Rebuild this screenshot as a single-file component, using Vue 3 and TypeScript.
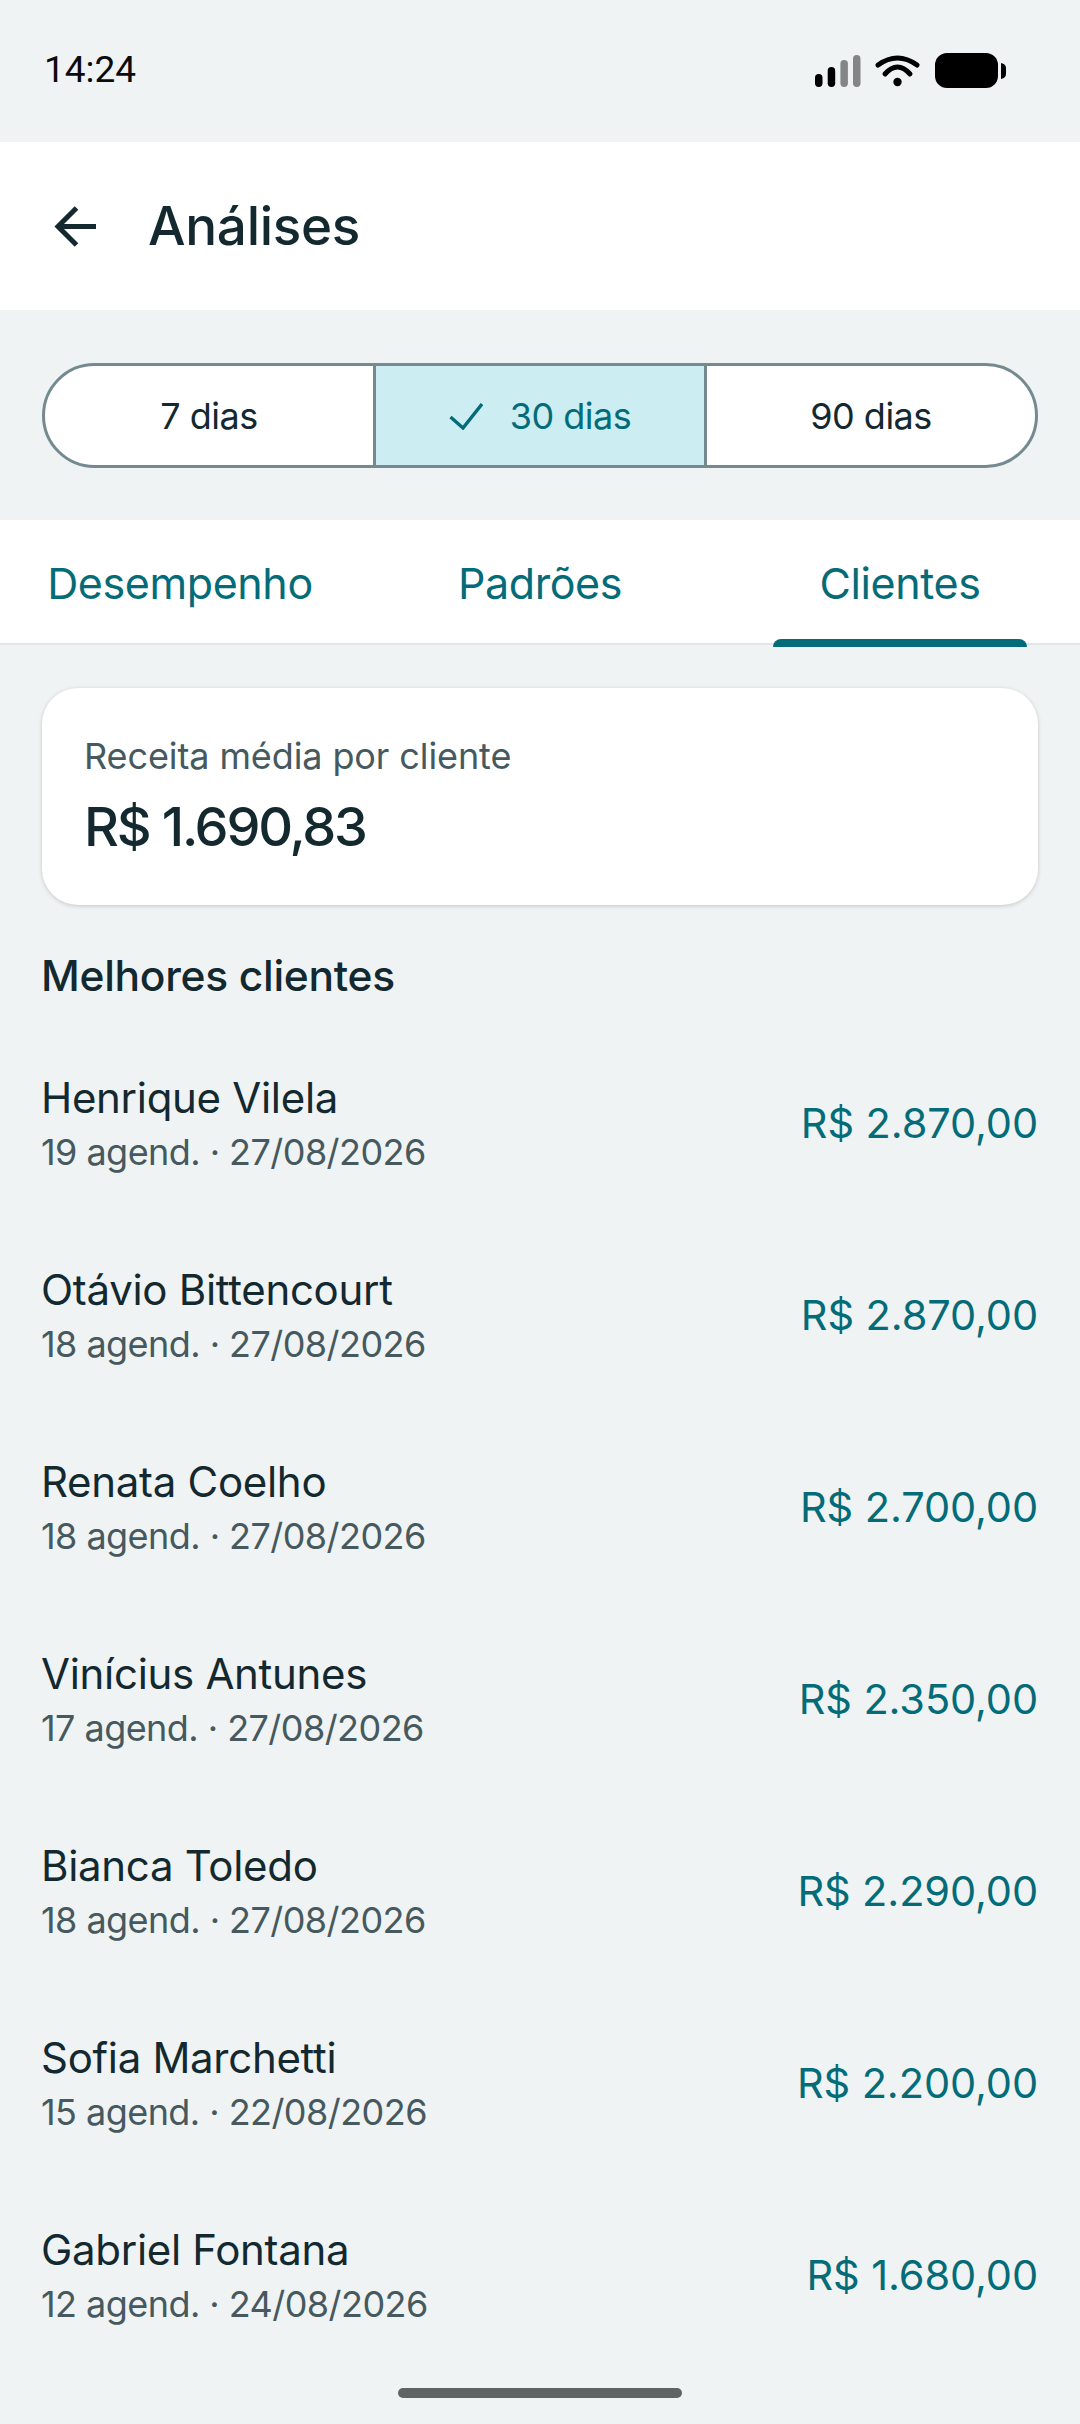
<script setup lang="ts">
const periods = [
  { label: '7 dias', active: false },
  { label: '30 dias', active: true },
  { label: '90 dias', active: false },
]

const tabs = [
  { label: 'Desempenho', active: false },
  { label: 'Padrões', active: false },
  { label: 'Clientes', active: true },
]

const clients = [
  { name: 'Henrique Vilela', info: '19 agend. · 27/08/2026', total: 'R$ 2.870,00' },
  { name: 'Otávio Bittencourt', info: '18 agend. · 27/08/2026', total: 'R$ 2.870,00' },
  { name: 'Renata Coelho', info: '18 agend. · 27/08/2026', total: 'R$ 2.700,00' },
  { name: 'Vinícius Antunes', info: '17 agend. · 27/08/2026', total: 'R$ 2.350,00' },
  { name: 'Bianca Toledo', info: '18 agend. · 27/08/2026', total: 'R$ 2.290,00' },
  { name: 'Sofia Marchetti', info: '15 agend. · 22/08/2026', total: 'R$ 2.200,00' },
  { name: 'Gabriel Fontana', info: '12 agend. · 24/08/2026', total: 'R$ 1.680,00' },
]
</script>

<template>
  <div class="screen">
    <div class="status">
      <span class="time">14:24</span>
      <svg class="status-icons" width="191" height="36" viewBox="0 0 191 36">
        <rect x="0" y="21" width="7.5" height="13" rx="3.7" fill="#000" />
        <rect x="12.7" y="14" width="7.5" height="20" rx="3.7" fill="#000" />
        <rect x="25.4" y="7" width="7.5" height="27" rx="3.7" fill="#000" opacity="0.45" />
        <rect x="38" y="2" width="7.5" height="32" rx="3.7" fill="#000" opacity="0.45" />
        <path d="M63 12 Q82.5 -2 102 12" fill="none" stroke="#000" stroke-width="5" stroke-linecap="round" />
        <path d="M70 21 Q82.5 7 95 21" fill="none" stroke="#000" stroke-width="5" stroke-linecap="round" />
        <circle cx="82.5" cy="29" r="4.2" fill="#000" />
        <rect x="120" y="0" width="63" height="35" rx="12" fill="#000" />
        <path d="M186 10 Q191 11 191 15 V21 Q191 25 186 26 Z" fill="#000" />
      </svg>
    </div>

    <header class="appbar">
      <svg class="back" width="48" height="48" viewBox="0 0 48 48">
        <path d="M46 24.5 H8 M26.5 6 L8 24.5 L26.5 43" fill="none" stroke="#13292f" stroke-width="5" />
      </svg>
      <h1 class="title">Análises</h1>
    </header>

    <div class="period-wrap">
      <div class="period">
        <div v-for="p in periods" :key="p.label" class="segment" :class="{ on: p.active }">
          <svg v-if="p.active" class="check" width="34" height="28" viewBox="0 0 34 28">
            <path d="M1.5 15 L14 26 L33 2" fill="none" stroke="#046c78" stroke-width="3.4" />
          </svg>
          <span>{{ p.label }}</span>
        </div>
      </div>
    </div>

    <nav class="tabs">
      <div v-for="t in tabs" :key="t.label" class="tab">
        <span>{{ t.label }}</span>
        <i v-if="t.active" class="indicator"></i>
      </div>
    </nav>

    <main class="content">
      <section class="card">
        <div class="card-label">Receita média por cliente</div>
        <div class="card-value">R$ 1.690,83</div>
      </section>

      <h2 class="section-title">Melhores clientes</h2>

      <div class="list">
        <div v-for="c in clients" :key="c.name" class="row">
          <div class="who">
            <div class="name">{{ c.name }}</div>
            <div class="info">{{ c.info }}</div>
          </div>
          <div class="total">{{ c.total }}</div>
        </div>
      </div>
    </main>

    <div class="home-pill"></div>
  </div>
</template>

<style>
html,
body {
  margin: 0;
  background: #eff3f4;
}
</style>

<style scoped>
.screen {
  position: relative;
  width: 1080px;
  height: 2424px;
  overflow: hidden;
  background: #eff3f4;
  font-family: Inter, 'Noto Sans', sans-serif;
  color: #13292f;
}
.status {
  height: 142px;
  display: flex;
  justify-content: space-between;
  align-items: flex-start;
  padding: 0 74px 0 44px;
  box-sizing: border-box;
}
.time {
  margin-top: 50px;
  font-family: Roboto, sans-serif;
  font-size: 37px;
  line-height: 40px;
  color: #0b0b0b;
}
.status-icons {
  margin-top: 53px;
}
.appbar {
  height: 168px;
  background: #fff;
  display: flex;
  align-items: center;
  padding-left: 50px;
}
.title {
  margin: 0 0 0 50px;
  font-size: 53px;
  font-weight: 500;
  letter-spacing: -0.3px;
}
.period-wrap {
  height: 210px;
  padding: 53px 42px 0;
  box-sizing: border-box;
}
.period {
  display: flex;
  height: 105px;
  box-sizing: border-box;
  border: 3px solid #748a90;
  border-radius: 53px;
  overflow: hidden;
  background: #fff;
}
.segment {
  flex: 1;
  display: flex;
  align-items: center;
  justify-content: center;
  gap: 27px;
  font-size: 36px;
  letter-spacing: -0.5px;
}
.segment + .segment {
  border-left: 3px solid #748a90;
}
.segment.on {
  background: #ccedf2;
  color: #046c78;
}
.tabs {
  display: flex;
  height: 125px;
  box-sizing: border-box;
  background: #fff;
  border-bottom: 2px solid #e2e6e8;
}
.tab {
  position: relative;
  flex: 1;
  display: flex;
  align-items: center;
  justify-content: center;
  padding-top: 3px;
  font-size: 43px;
  letter-spacing: -0.4px;
  color: #046c78;
}
.indicator {
  position: absolute;
  left: 53px;
  right: 53px;
  bottom: -4px;
  height: 8px;
  border-radius: 8px 8px 0 0;
  background: #046c78;
}
.content {
  padding: 43px 42px 0;
}
.card {
  height: 217px;
  box-sizing: border-box;
  padding: 46px 42px 0;
  background: #fff;
  border-radius: 36px;
  box-shadow: 0 1px 4px rgba(0, 0, 0, 0.18);
}
.card-label {
  font-size: 36px;
  line-height: 44px;
  letter-spacing: -0.1px;
  color: #46595e;
}
.card-value {
  margin-top: 19px;
  font-size: 54px;
  line-height: 60px;
  font-weight: 500;
  letter-spacing: -2.2px;
}
.section-title {
  margin: 46px 0 0 -1px;
  font-size: 42.5px;
  line-height: 50px;
  font-weight: 500;
  letter-spacing: -0.3px;
}
.list {
  margin-top: 26px;
}
.row {
  height: 192px;
  display: flex;
  align-items: center;
  justify-content: space-between;
}
.who {
  margin-left: -1px;
}
.name {
  font-size: 42px;
  line-height: 52px;
  letter-spacing: -0.3px;
}
.info {
  margin-top: 6px;
  font-size: 36px;
  line-height: 44px;
  letter-spacing: -0.55px;
  color: #46595e;
}
.total {
  font-size: 41.5px;
  font-weight: 400;
  letter-spacing: -0.1px;
  color: #046c78;
}
.home-pill {
  position: absolute;
  left: 398px;
  top: 2388px;
  width: 284px;
  height: 10px;
  border-radius: 5px;
  background: #5f6363;
}
</style>
